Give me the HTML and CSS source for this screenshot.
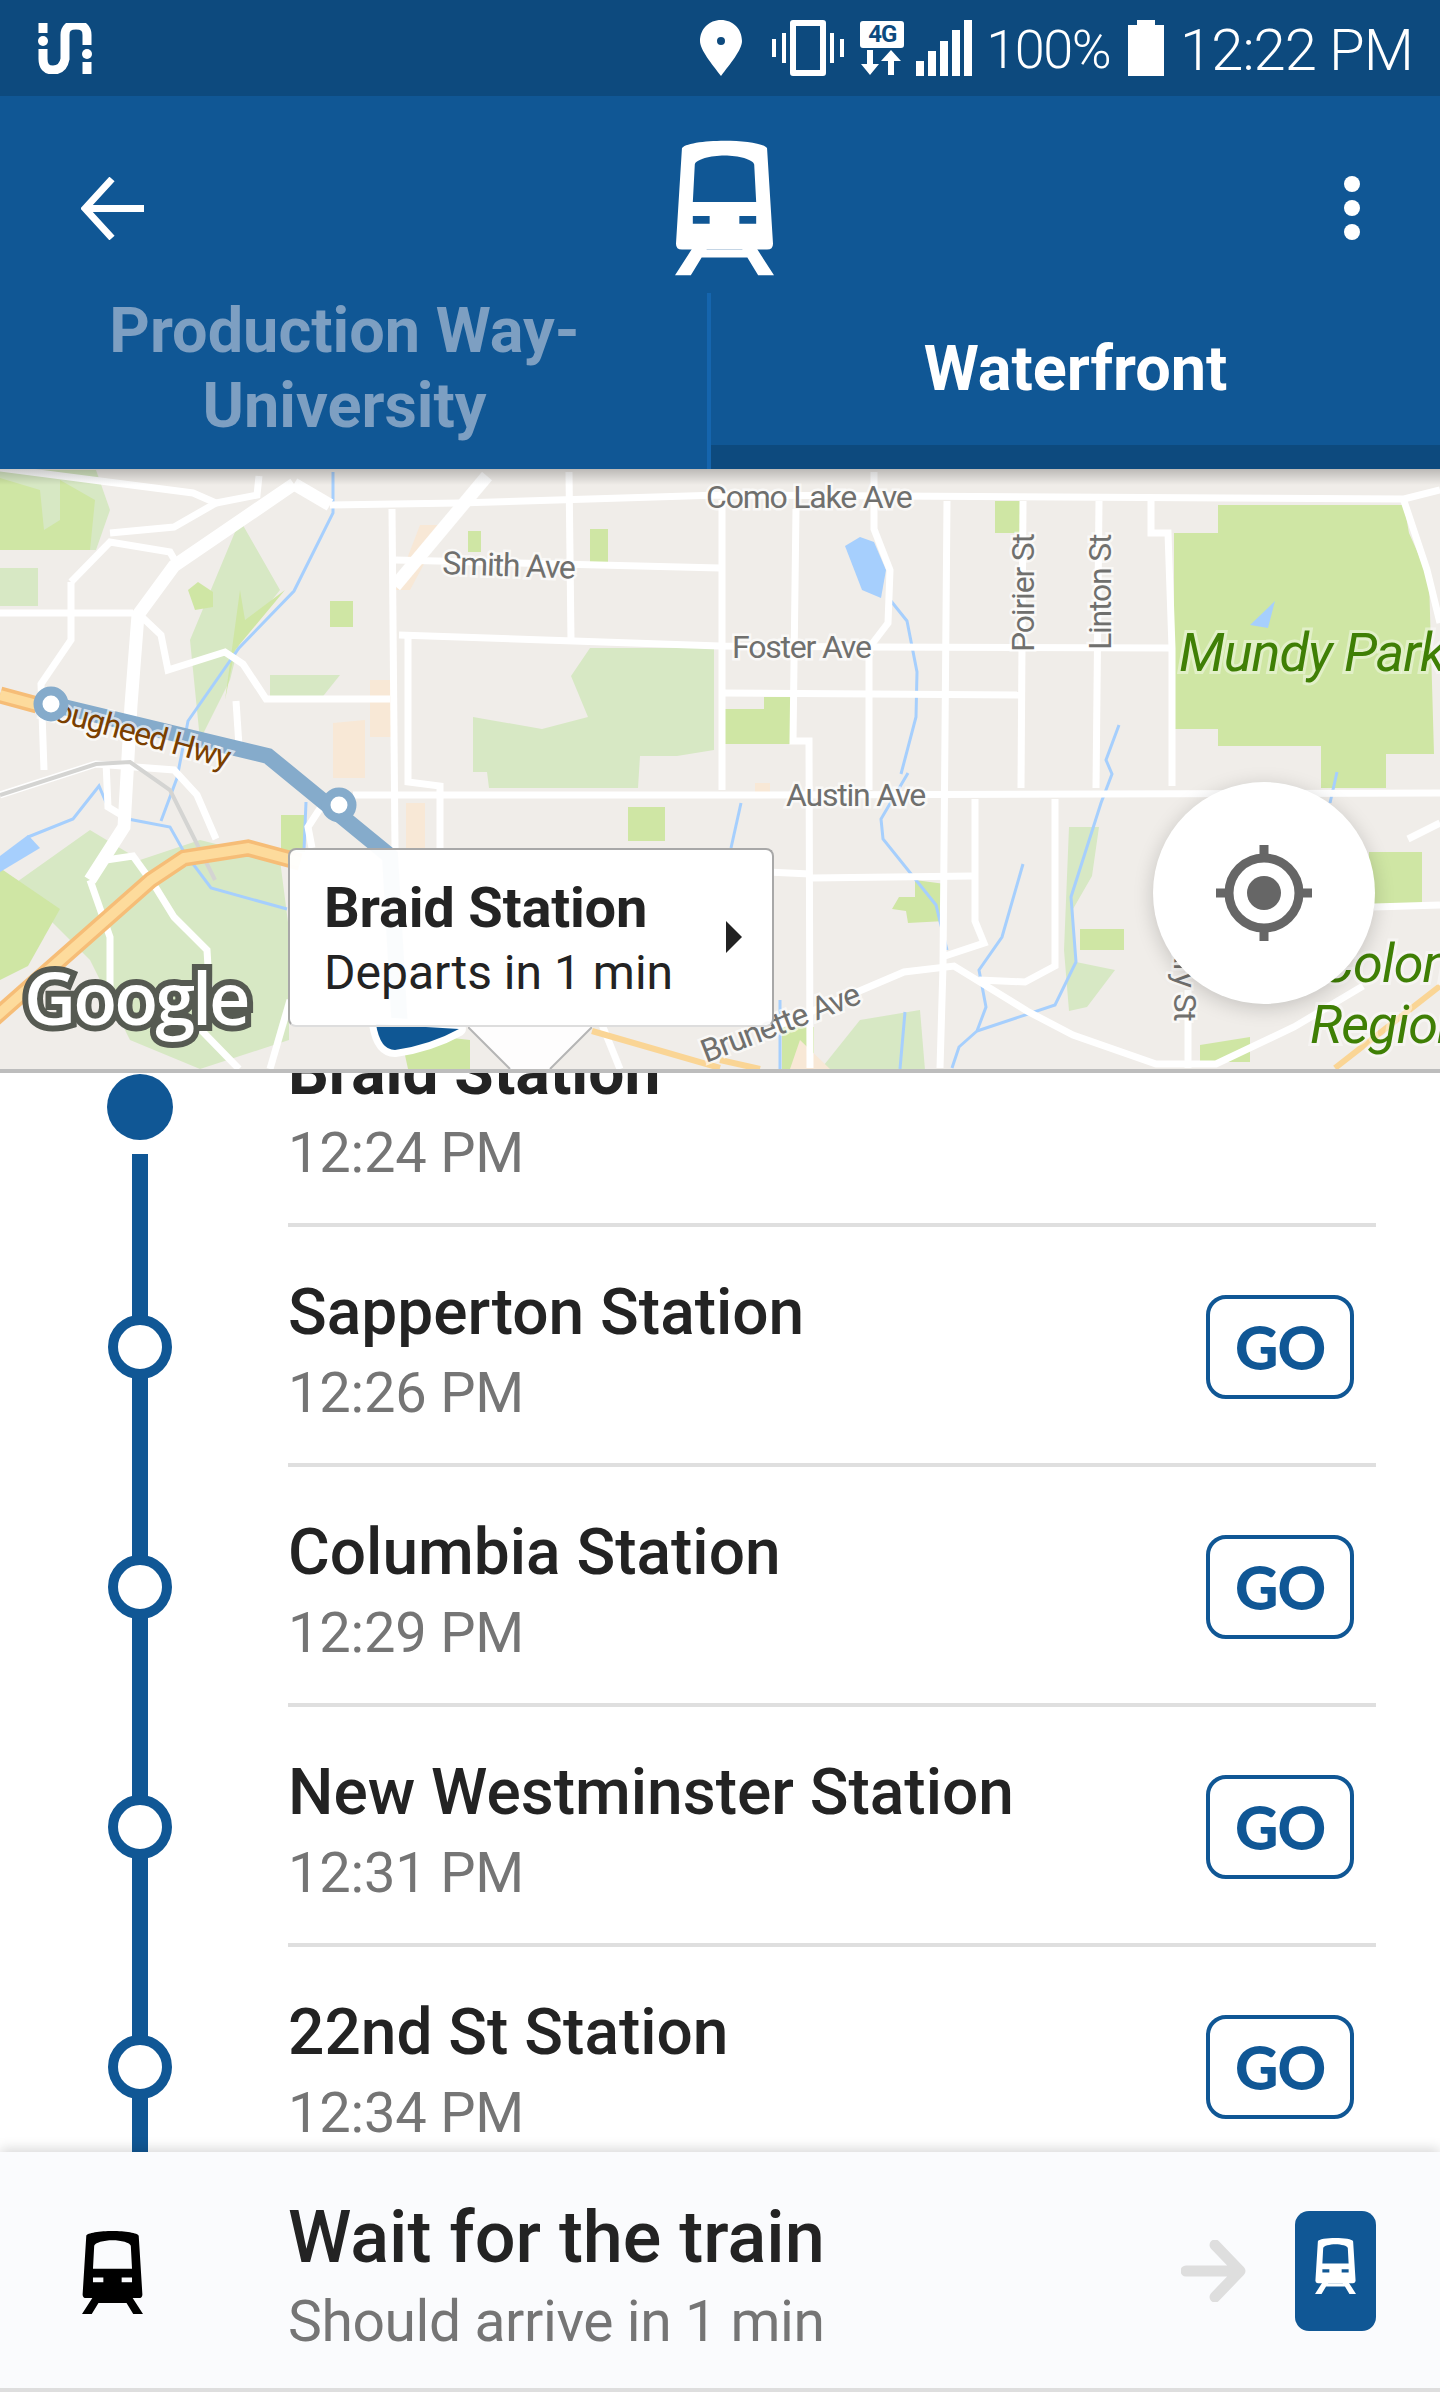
FILE: index.html
```html
<!DOCTYPE html>
<html lang="en">
<head>
<meta charset="UTF-8">
<meta name="viewport" content="width=device-width, initial-scale=1.0">
<title>Trip details</title>
<link rel="stylesheet" href="styles.css">
</head>
<body>
  <svg class="icon-defs" width="0" height="0">
    <symbol id="train" viewBox="0 0 100 136">
      <path fill-rule="evenodd" d="M7 8C8 3 30 0 50 0S92 3 93 8L99 104Q99 110 93 110H7Q1 110 1 104ZM20 24L18 62H82L80 24C79 19 64 15 50 15S21 19 20 24ZM18 76V84H35V76ZM65 76V84H82V76Z"/>
      <path d="M18 108H33L16 136H0ZM67 108H82L100 136H84ZM25 110H75V118H25Z"/>
    </symbol>
  </svg>

  <div class="app">
    <div class="status-bar">
      <svg class="status-logo" viewBox="0 0 54 51">
        <path d="M5 0V10M5 26V36Q5 47 15 47T27 36V12Q27 2 38 2T49 12V22M49 39V51"/>
        <circle cx="5" cy="18" r="5"/><circle cx="49" cy="31" r="5"/>
      </svg>
      <div class="status-right">
        <svg class="status-pin" viewBox="0 0 42 56"><path fill-rule="evenodd" d="M21 0C33 0 42 9 42 21C42 30 30 44 21 56C12 44 0 30 0 21C0 9 9 0 21 0ZM21 17A4 4 0 1 0 21 25A4 4 0 1 0 21 17Z"/></svg>
        <svg class="status-vibrate" viewBox="0 0 72 56"><path fill-rule="evenodd" d="M21 0H51Q54 0 54 3V53Q54 56 51 56H21Q18 56 18 53V3Q18 0 21 0ZM24 6V50H48V6ZM10 13H14V43H10ZM58 13H62V43H58ZM0 19H4V37H0ZM68 19H72V37H68Z"/></svg>
        <div class="status-network">
          <span class="net-label">4G</span>
          <svg class="net-arrows" viewBox="0 0 42 25"><path d="M6 0H12V14H18L9 25L0 14H6ZM27 25H33V11H40L30 0L20 11H27Z"/></svg>
        </div>
        <svg class="status-signal" viewBox="0 0 56 56"><path d="M0 41H8V56H0ZM12 31H20V56H12ZM24 21H32V56H24ZM36 10H44V56H36ZM48 0H56V56H48Z"/></svg>
        <span class="status-pct">100%</span>
        <svg class="status-battery" viewBox="0 0 36 56"><path d="M9 0H27V5H36V56H0V5H9Z"/></svg>
        <span class="status-time">12:22 PM</span>
      </div>
    </div>

    <div class="header">
      <div class="header-top">
        <svg class="back-icon" viewBox="0 0 63 63"><path d="M31 2L4 31.500L31 61M4 31.500H63"/></svg>
        <svg class="header-train"><use href="#train"/></svg>
        <div class="kebab"><i></i><i></i><i></i></div>
      </div>
      <div class="tabs">
        <div class="tab tab-off">Production Way-<br>University</div>
        <div class="tab tab-on">Waterfront</div>
      </div>
    </div>

    <div class="map">
      <svg class="map-canvas" viewBox="0 469 1440 600">
        <!-- parks -->
        <g class="park-pale">
          <path d="M0 470H96L110 510L96 550H0Z"/>
          <path d="M473 717L542 729L588 717L571 676L590 648L714 648V750L677 756H640L638 788H489L487 772H473Z"/>
          <path d="M14 884L90 830L140 860L200 840L280 860L289 930V1040L200 1069L130 1040L90 960Z"/>
          <path d="M0 568H38V606H0Z"/>
          <path d="M1069 827H1099L1092 876L1073 909L1076 962L1115 970L1087 1007L1069 1011L1064 950Z"/>
          <path d="M240 520L280 590L240 640L230 680L200 740L190 640Z"/>
          <path d="M270 675H340L320 700H270Z"/>
          <path d="M860 1020L920 1010L925 1070H820Z"/>
        </g>
        <g class="park">
          <path d="M1174 533H1218V505H1404L1409 533L1429 578L1434 754H1386V788H1321V746H1218V729H1174Z"/>
          <path d="M995 501H1021V533H995Z"/>
          <path d="M722 709H764V697H791V744H722Z"/>
          <path d="M892 909L899 897H915V880L945 884V921L908 923L906 911Z"/>
          <path d="M1080 929H1124V950H1080Z"/>
          <path d="M1369 852H1422V905H1369Z"/>
          <path d="M1200 1045L1250 1037V1062H1200Z"/>
          <path d="M782 1027H814V1069H782Z"/>
          <path d="M330 601H353V627H330Z"/>
          <path d="M590 529H608V562H590Z"/>
          <path d="M628 807H665V841H628Z"/>
          <path d="M468 531H481V552H468Z"/>
          <path d="M188 590L198 582L213 592V607L195 610Z"/>
          <path d="M281 815H305V852H281Z"/>
          <path d="M0 868L60 909L28 966L0 980Z"/>
          <path d="M0 478L40 490L44 530L60 520V480L95 500L90 550H0Z"/>
          <path d="M240 590L245 620L285 590L235 650L225 700Z"/>
          <path d="M408 1069L400 1032L470 1040V1069Z"/>
        </g>
        <g class="peach">
          <path d="M370 680H392V737H370Z"/>
          <path d="M333 723L365 720V778H333Z"/>
          <path d="M406 803H425V848H406Z"/>
          <path d="M420 525H445L410 590H395Z"/>
          <path d="M755 783H770V795H755Z"/>
          <path d="M800 1040L830 1069H790Z"/>
        </g>
        <!-- water -->
        <g class="water">
          <path d="M845 546L860 537L874 542L886 570L881 598L862 590Z"/>
          <path d="M1250 625L1275 601L1268 628Z"/>
          <path d="M0 856L28 835L40 848L0 872Z"/>
        </g>
        <g class="river">
          <path d="M333 472V513L294 591L239 648L188 721L177 778L161 821"/>
          <path d="M28 837L73 819L99 786L108 807L128 819L170 827L184 852L211 888L287 909"/>
          <path d="M891 601L907 621L917 672L916 717L901 774"/>
          <path d="M908 773L881 819L883 839L936 905L947 950"/>
          <path d="M1023 864L1002 937L979 970L986 1007L977 1031L959 1047L952 1068"/>
          <path d="M977 1031L1055 1005L1076 962L1071 897L1101 803L1112 774L1106 760L1119 725"/>
          <path d="M741 803L731 848"/>
          <path d="M1337 772L1330 803"/>
          <path d="M306 802L304 850"/>
          <path d="M905 1012L900 1069M780 1000V1069"/>
        </g>
        <!-- streets -->
        <g class="road">
          <path d="M0 468L193 493L216 503L257 495L259 476"/>
          <path d="M330 505L459 503L720 495L1404 499L1440 490"/>
          <path d="M392 509L395 848"/>
          <path d="M569 472L571 640"/>
          <path d="M399 635L720 646L871 647L1170 648"/>
          <path d="M395 560L720 568"/>
          <path d="M353 795L720 795L1440 793"/>
          <path d="M408 637V782L440 786V848"/>
          <path d="M0 613H133"/>
          <path d="M71 582V640L41 684L44 770"/>
          <path d="M71 582L110 542L170 552L178 566"/>
          <path d="M110 533L174 527L216 503"/>
          <path d="M142 617L161 635L168 670L225 652L243 664L266 699H390"/>
          <path d="M236 701L239 746"/>
          <path d="M0 795L96 764L174 770L197 795L216 839"/>
          <path d="M106 762L108 807L128 819"/>
          <path d="M321 807L308 827L312 848"/>
          <path d="M106 860L133 856L156 888L174 917L207 950L210 1000L202 1031L239 1069"/>
          <path d="M90 880L110 937V1000"/>
          <path d="M796 509L793 741H809L810 1068"/>
          <path d="M874 472V529L890 570L888 623L869 648V790"/>
          <path d="M947 501L943 966L940 1068"/>
          <path d="M1023 501L1021 788"/>
          <path d="M1099 501L1096 788"/>
          <path d="M1151 501V533H1168L1172 648V786"/>
          <path d="M722 693L1023 695"/>
          <path d="M722 500V790"/>
          <path d="M1055 799V966L1025 982L979 980"/>
          <path d="M975 799V921L984 943L945 956"/>
          <path d="M812 878L972 876"/>
          <path d="M720 870L810 874"/>
          <path d="M775 1027L904 972L954 966L1027 1011L1073 1035L1156 1064H1216L1294 1027L1363 986"/>
          <path d="M1188 990V1068"/>
          <path d="M1404 501L1427 570L1440 623"/>
          <path d="M1374 907L1440 905"/>
          <path d="M1408 839L1440 823"/>
          <path d="M592 1000L620 1069"/>
          <path d="M270 1069L290 1000"/>
        </g>
        <g class="road-wide">
          <path d="M487 476L395 586"/>
          <path d="M294 484L174 566L138 615L131 705L124 827L90 880"/>
          <path d="M294 484L330 505"/>
        </g>
        <path class="road-grey" d="M0 795L96 764L130 762L170 790L215 880"/>
        <!-- highway -->
        <g class="highway-edge">
          <path d="M-10 1022L151 880L184 858L248 848L300 862"/>
          <path d="M0 695L37 705"/>
        </g>
        <g class="highway">
          <path d="M-10 1022L151 880L184 858L248 848L300 862"/>
          <path d="M0 695L37 705"/>
        </g>
        <path class="highway-thin" d="M592 1031L720 1068M1335 1068L1440 986M720 1060L760 1069"/>
        <!-- route -->
        <path class="route-line" d="M51 704L268 756L390 856L400 1030"/>
        <path class="map-pin-edge" d="M376 1024Q380 1050 395 1050Q430 1045 459 1029Z"/>
        <path class="map-pin" d="M376 1024Q380 1050 395 1050Q430 1045 459 1029Z"/>
        <!-- labels -->
        <text class="map-label" x="706" y="508">Como Lake Ave</text>
        <text class="map-label" transform="rotate(2 442 574)" x="442" y="574">Smith Ave</text>
        <text class="map-label" x="732" y="658">Foster Ave</text>
        <text class="map-label" transform="rotate(-90 1034 652)" x="1034" y="652">Poirier St</text>
        <text class="map-label" transform="rotate(-90 1111 650)" x="1111" y="650">Linton St</text>
        <text class="map-label" x="786" y="806">Austin Ave</text>
        <text class="map-label" transform="rotate(-21 706 1063)" x="706" y="1063">Brunette Ave</text>
        <text class="map-label" transform="rotate(90 1174 920)" x="1174" y="920">Mary St</text>
        <text class="map-label road-label" transform="rotate(15.500 37 716)" x="37" y="716">Lougheed Hwy</text>
        <text class="map-park-label" x="1179" y="671">Mundy Park</text>
        <text class="map-park-label" x="1320" y="982">Colony</text>
        <text class="map-park-label" x="1310" y="1043">Regional</text>
        <!-- stops on top of label -->
        <circle class="route-stop" cx="51" cy="704" r="13"/>
        <circle class="route-stop" cx="339" cy="805" r="13"/>
        <text class="google-mark" x="24" y="1025">Google</text>
      </svg>

      <div class="callout">
        <div class="callout-text">
          <div class="callout-title">Braid Station</div>
          <div class="callout-sub">Departs in 1 min</div>
        </div>
        <svg class="callout-arrow" viewBox="0 0 16 32"><path d="M0 0L16 16L0 32Z"/></svg>
      </div>
      <svg class="callout-tail" viewBox="0 0 124 42"><path class="tail-fill" d="M0 0H124L62 62Z"/><path class="tail-edge" d="M0 0L42 42M124 0L82 42"/></svg>

      <button class="locate-btn">
        <svg viewBox="0 0 96 96"><path d="M48 0V14M48 82V96M0 48H14M82 48H96"/><circle class="locate-ring" cx="48" cy="48" r="35"/><circle class="locate-dot" cx="48" cy="48" r="17"/></svg>
      </button>
    </div>

    <div class="stops">
      <div class="stop stop-current">
        <div class="stop-rail"><span class="stop-dot"></span></div>
        <div class="stop-body">
          <div>
            <div class="stop-name stop-name-bold">Braid Station</div>
            <div class="stop-time">12:24 PM</div>
          </div>
        </div>
      </div>
      <div class="stop">
        <div class="stop-rail"><span class="stop-ring"></span></div>
        <div class="stop-body">
          <div>
            <div class="stop-name">Sapperton Station</div>
            <div class="stop-time">12:26 PM</div>
          </div>
          <a class="go-btn">GO</a>
        </div>
      </div>
      <div class="stop">
        <div class="stop-rail"><span class="stop-ring"></span></div>
        <div class="stop-body">
          <div>
            <div class="stop-name">Columbia Station</div>
            <div class="stop-time">12:29 PM</div>
          </div>
          <a class="go-btn">GO</a>
        </div>
      </div>
      <div class="stop">
        <div class="stop-rail"><span class="stop-ring"></span></div>
        <div class="stop-body">
          <div>
            <div class="stop-name">New Westminster Station</div>
            <div class="stop-time">12:31 PM</div>
          </div>
          <a class="go-btn">GO</a>
        </div>
      </div>
      <div class="stop">
        <div class="stop-rail"><span class="stop-ring"></span></div>
        <div class="stop-body">
          <div>
            <div class="stop-name">22nd St Station</div>
            <div class="stop-time">12:34 PM</div>
          </div>
          <a class="go-btn">GO</a>
        </div>
      </div>
    </div>

    <div class="trip-bar">
      <div class="trip-icon"><svg class="trip-train"><use href="#train"/></svg></div>
      <div class="trip-text">
        <div class="trip-title">Wait for the train</div>
        <div class="trip-sub">Should arrive in 1 min</div>
      </div>
      <svg class="trip-arrow" viewBox="0 0 65 62"><path d="M5 31H58M34 5L59 31L34 57"/></svg>
      <div class="trip-badge"><svg class="badge-train"><use href="#train"/></svg></div>
    </div>
  </div>
</body>
</html>
```

FILE: styles.css
```css
* {
  box-sizing: border-box;
}
body {
  margin: 0;
  font-family: Roboto, 'Liberation Sans', sans-serif;
  background: #fff;
  color: #232323;
}
.icon-defs {
  position: absolute;
}
.app {
  width: 1440px;
  height: 2392px;
  overflow: hidden;
  display: flex;
  flex-direction: column;
}

/* status bar */
.status-bar {
  height: 96px;
  flex: none;
  background: #0d4a7e;
  color: #fff;
  display: flex;
  align-items: center;
  justify-content: space-between;
  padding: 0 27px 0 38px;
}
.status-bar svg {
  fill: #fff;
  display: block;
}
.status-logo {
  width: 54px;
  height: 51px;
}
.status-logo path {
  fill: none;
  stroke: #fff;
  stroke-width: 9;
}
.status-right {
  display: flex;
  align-items: center;
}
.status-pin {
  width: 42px;
  height: 56px;
  margin-right: 30px;
}
.status-vibrate {
  width: 72px;
  height: 56px;
  margin-right: 16px;
}
.status-network {
  width: 44px;
  display: flex;
  flex-direction: column;
  align-items: center;
  gap: 2px;
  margin-right: 12px;
}
.net-label {
  width: 44px;
  height: 27px;
  background: #fff;
  color: #0d4a7e;
  border-radius: 3px;
  font-size: 24px;
  font-weight: 700;
  line-height: 27px;
  text-align: center;
  letter-spacing: -1px;
}
.net-arrows {
  width: 42px;
  height: 25px;
}
.status-signal {
  width: 56px;
  height: 56px;
  margin-right: 14px;
}
.status-pct {
  font-size: 54px;
  font-weight: 300;
  line-height: 56px;
  letter-spacing: -1.5px;
  margin-right: 18px;
  padding-top: 3px;
}
.status-battery {
  width: 36px;
  height: 56px;
  margin-right: 16px;
}
.status-time {
  font-size: 58px;
  font-weight: 300;
  line-height: 56px;
  letter-spacing: -1px;
  padding-top: 3px;
}

/* header */
.header {
  height: 373px;
  flex: none;
  background: #105795;
}
.header-top {
  height: 197px;
  padding: 44px 80px 17px 81px;
  display: grid;
  grid-template-columns: 1fr auto 1fr;
  align-items: center;
}
.back-icon {
  width: 63px;
  height: 63px;
}
.back-icon path {
  fill: none;
  stroke: #fff;
  stroke-width: 7;
}
.header-train {
  width: 99px;
  height: 136px;
  fill: #fff;
  margin-left: 8px;
}
.kebab {
  justify-self: end;
  display: flex;
  flex-direction: column;
  gap: 8px;
}
.kebab i {
  display: block;
  width: 16px;
  height: 16px;
  border-radius: 50%;
  background: #fff;
}
.tabs {
  height: 176px;
  display: flex;
}
.tab {
  display: flex;
  align-items: center;
  justify-content: center;
  text-align: center;
  font-size: 63px;
  line-height: 75px;
  font-weight: 700;
}
.tab-off {
  width: 711px;
  padding: 0 18px 26px 0;
  color: #7d9fc2;
  border-right: 4px solid #1565ae;
}
.tab-on {
  flex: 1;
  color: #fff;
  padding-bottom: 2px;
  border-bottom: 24px solid #0d4a7e;
}

/* map */
.map {
  position: relative;
  z-index: 1;
  height: 604px;
  flex: none;
  background: #f0ede9;
  border-bottom: 4px solid #bdbdbd;
}
.map::before {
  content: '';
  position: absolute;
  left: 0;
  right: 0;
  top: 0;
  height: 16px;
  background: linear-gradient(rgba(0, 0, 0, .22), rgba(0, 0, 0, 0));
}
.map-canvas {
  display: block;
  width: 1440px;
  height: 600px;
}
.map-canvas path {
  fill: none;
}
.map-canvas .park-pale path {
  fill: #d7e8c4;
}
.map-canvas .park path {
  fill: #cfe6a4;
}
.map-canvas .peach path {
  fill: #f8e8d6;
}
.map-canvas .water path {
  fill: #a6cffd;
}
.map-canvas .river path {
  stroke: #a6cffd;
  stroke-width: 3;
}
.map-canvas .road path {
  stroke: #fff;
  stroke-width: 7;
}
.map-canvas .road-wide path {
  stroke: #fff;
  stroke-width: 13;
}
.map-canvas .road-grey {
  stroke: #d4d4d2;
  stroke-width: 4;
}
.map-canvas .highway-edge path {
  stroke: #f6bd77;
  stroke-width: 17;
}
.map-canvas .highway path {
  stroke: #fddb9c;
  stroke-width: 10;
}
.map-canvas .highway-thin {
  stroke: #fad595;
  stroke-width: 6;
}
.map-canvas .route-line {
  stroke: #85abcb;
  stroke-width: 16;
}
.map-canvas .map-pin-edge {
  fill: #fff;
  stroke: #fff;
  stroke-width: 14;
  stroke-linejoin: round;
}
.map-canvas .map-pin {
  fill: #0f5794;
}
.route-stop {
  fill: #fff;
  stroke: #85abcb;
  stroke-width: 9;
}
.map-label {
  font-size: 32px;
  fill: #70706e;
  stroke: rgba(255, 255, 255, .65);
  stroke-width: 5px;
  paint-order: stroke;
  letter-spacing: -1.2px;
}
.road-label {
  fill: #7b3f00;
}
.map-park-label {
  font-size: 54px;
  font-style: italic;
  fill: #3f7f05;
  stroke: rgba(255, 255, 255, .4);
  stroke-width: 6px;
  paint-order: stroke;
  letter-spacing: -1px;
}
.google-mark {
  font-family: 'Open Sans', sans-serif;
  font-size: 72px;
  font-weight: 600;
  fill: #fff;
  stroke: #565a52;
  stroke-width: 12px;
  paint-order: stroke;
  letter-spacing: -3px;
}
.callout {
  position: absolute;
  left: 288px;
  top: 379px;
  width: 486px;
  height: 179px;
  padding: 25px 30px 0 34px;
  background: rgba(255, 255, 255, .96);
  border: 2px solid #a8a8a8;
  border-bottom-color: #ddd;
  border-radius: 8px;
  display: flex;
  justify-content: space-between;
}
.callout-title {
  font-size: 56px;
  font-weight: 700;
  line-height: 66px;
  letter-spacing: -.2px;
}
.callout-sub {
  font-size: 48px;
  line-height: 58px;
  margin-top: 3px;
}
.callout-arrow {
  width: 16px;
  height: 32px;
  margin-top: 46px;
  fill: #222;
}
.callout-tail {
  position: absolute;
  left: 468px;
  top: 558px;
  width: 124px;
  height: 42px;
}
.tail-fill {
  fill: rgba(255, 255, 255, .88);
}
.tail-edge {
  fill: none;
  stroke: #b5b5b5;
  stroke-width: 2;
}
.locate-btn {
  position: absolute;
  left: 1153px;
  top: 313px;
  width: 222px;
  height: 222px;
  padding: 0;
  border: 0;
  border-radius: 50%;
  background: #fff;
  box-shadow: 0 4px 20px rgba(0, 0, 0, .18);
  display: flex;
  align-items: center;
  justify-content: center;
}
.locate-btn svg {
  width: 96px;
  height: 96px;
}
.locate-btn path {
  stroke: #666;
  stroke-width: 9;
}
.locate-ring {
  fill: none;
  stroke: #666;
  stroke-width: 9;
}
.locate-dot {
  fill: #666;
}

/* stop list */
.stops {
  flex: 1;
  min-height: 0;
  overflow: hidden;
}
.stop {
  height: 240px;
  display: flex;
}
.stop-current {
  margin-top: -86px;
}
.stop-rail {
  position: relative;
  width: 288px;
  flex: none;
  display: flex;
  align-items: center;
  justify-content: center;
  padding-right: 8px;
}
.stop-rail::before {
  content: '';
  position: absolute;
  left: 132px;
  top: 0;
  bottom: 0;
  width: 16px;
  background: #105795;
}
.stop-current .stop-rail::before {
  top: 167px;
}
.stop-dot,
.stop-ring {
  position: relative;
  border-radius: 50%;
}
.stop-dot {
  width: 66px;
  height: 66px;
  background: #105795;
}
.stop-ring {
  width: 64px;
  height: 64px;
  background: #fff;
  border: 10px solid #105795;
}
.stop-body {
  flex: 1;
  margin-right: 64px;
  padding: 48px 22px 0 0;
  border-bottom: 4px solid #dfdfdf;
  display: flex;
  justify-content: space-between;
}
.stop-name {
  font-size: 64px;
  font-weight: 500;
  line-height: 76px;
}
.stop-name-bold {
  font-weight: 700;
}
.stop-time {
  margin-top: 10px;
  font-size: 56px;
  line-height: 64px;
  color: #757575;
  letter-spacing: -.2px;
}
.go-btn {
  width: 148px;
  height: 104px;
  margin-top: 20px;
  border: 4px solid #105795;
  border-radius: 20px;
  display: flex;
  align-items: center;
  justify-content: center;
  color: #105795;
  font-family: Lato, sans-serif;
  font-size: 60px;
  font-weight: 900;
  letter-spacing: -1px;
}

/* bottom bar */
.trip-bar {
  position: relative;
  height: 240px;
  flex: none;
  background: #fafbfd;
  border-bottom: 4px solid #dedede;
  box-shadow: 0 -3px 12px rgba(0, 0, 0, .16);
  display: flex;
  align-items: center;
  padding-right: 64px;
}
.trip-icon {
  width: 288px;
  flex: none;
  padding-left: 82px;
}
.trip-train {
  display: block;
  width: 61px;
  height: 83px;
  fill: #000;
  margin-top: 4px;
}
.trip-text {
  flex: 1;
  padding-top: 11px;
}
.trip-title {
  font-size: 72px;
  font-weight: 500;
  line-height: 84px;
}
.trip-sub {
  margin-top: 8px;
  font-size: 57px;
  line-height: 68px;
  color: #757575;
  letter-spacing: -.4px;
}
.trip-arrow {
  width: 65px;
  height: 62px;
  margin: 2px 49px 0 0;
}
.trip-arrow path {
  fill: none;
  stroke: #dedede;
  stroke-width: 11;
  stroke-linecap: round;
  stroke-linejoin: round;
}
.trip-badge {
  width: 81px;
  height: 120px;
  margin-top: 2px;
  border-radius: 14px;
  background: #105795;
  padding: 27px 20px 0;
}
.badge-train {
  display: block;
  width: 41px;
  height: 56px;
  fill: #fff;
}
```
